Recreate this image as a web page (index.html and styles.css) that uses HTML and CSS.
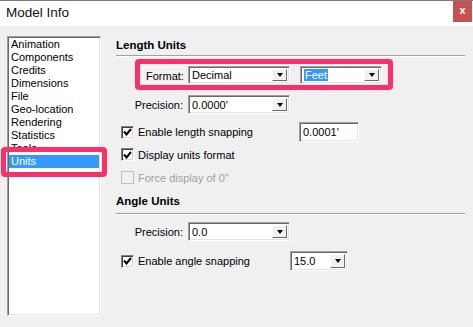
FILE: index.html
```html
<!DOCTYPE html>
<html lang="en">
<head>
    <meta charset="UTF-8">
    <title>Model Info</title>
    <link rel="stylesheet" href="styles.css">
</head>
<body>

    <div class="titlebar">
        <span class="title">Model Info</span>
        <span class="close">x</span>
    </div>

    <div class="dialog">
        <ul class="list">
            <li>Animation</li>
            <li>Components</li>
            <li>Credits</li>
            <li>Dimensions</li>
            <li>File</li>
            <li>Geo-location</li>
            <li>Rendering</li>
            <li>Statistics</li>
            <li>Tools</li>
            <li class="selected">Units</li>
        </ul>
        <div class="mark mark-units"></div>

        <div class="panel">
            <div class="heading">Length Units</div>
            <div class="sep"></div>

            <div class="format-box">
                <div class="format-row">
                    <span class="format-label">Format:</span>
                    <div class="combo combo-short"><span>Decimal</span><i class="arrow"></i></div>
                    <div class="combo combo-feet"><span class="picked">Feet</span><i class="arrow"></i></div>
                </div>
            </div>

            <div class="row prec-row">
                <span class="label">Precision:</span>
                <div class="combo"><span>0.0000'</span><i class="arrow"></i></div>
            </div>

            <div class="row check-row snap-row">
                <span class="check on"><svg width="9" height="8" viewBox="0 0 9 8"><path d="M1 3.5 L3.5 6.5 L8 1" fill="none" stroke="#000" stroke-width="2"/></svg></span>
                <span class="check-text snap-text">Enable length snapping</span>
                <div class="textbox">0.0001'</div>
            </div>

            <div class="row check-row units-row">
                <span class="check on"><svg width="9" height="8" viewBox="0 0 9 8"><path d="M1 3.5 L3.5 6.5 L8 1" fill="none" stroke="#000" stroke-width="2"/></svg></span>
                <span class="check-text">Display units format</span>
            </div>

            <div class="row check-row force-row">
                <span class="check off"></span>
                <span class="check-text muted">Force display of 0"</span>
            </div>

            <div class="heading angle-heading">Angle Units</div>
            <div class="sep angle-sep"></div>

            <div class="row angle-prec">
                <span class="label">Precision:</span>
                <div class="combo"><span>0.0</span><i class="arrow"></i></div>
            </div>

            <div class="row check-row angle-snap">
                <span class="check on"><svg width="9" height="8" viewBox="0 0 9 8"><path d="M1 3.5 L3.5 6.5 L8 1" fill="none" stroke="#000" stroke-width="2"/></svg></span>
                <span class="check-text angle-text">Enable angle snapping</span>
                <div class="combo combo-angle"><span>15.0</span><i class="arrow"></i></div>
            </div>
        </div>
    </div>

</body>
</html>
```

FILE: styles.css
```css
body {
    margin: 0;
    width: 473px;
    height: 327px;
    overflow: hidden;
    background: #f0f0f0;
    font-family: "Liberation Sans", Arial, sans-serif;
    font-size: 11px;
    color: #000;
}

.titlebar {
    height: 25px;
    background: #fff;
    border-top: 1px solid #7a7a7a;
    display: flex;
    align-items: flex-start;
    justify-content: space-between;
}

.title {
    font-size: 13.5px;
    line-height: 24px;
    padding-left: 6px;
    color: #111;
}

.close {
    width: 19px;
    height: 21px;
    margin-right: 1px;
    background: #c75050;
    color: #fff;
    font-weight: bold;
    font-size: 11px;
    line-height: 19px;
    text-align: center;
}

.dialog {
    position: relative;
    display: flex;
    align-items: flex-start;
    height: 301px;
}

.list {
    list-style: none;
    margin: 10px 0 0 7px;
    padding: 1px 0 0 0;
    width: 92px;
    height: 277px;
    background: #fff;
    border: 1px solid;
    border-color: #a0a0a0 #fff #fff #a0a0a0;
    box-shadow: inset 1px 1px 0 #696969, inset -1px -1px 0 #e3e3e3;
    overflow: hidden;
}

.list li {
    height: 13px;
    line-height: 13px;
    margin: 0 1px 0 1px;
    padding-left: 2px;
    white-space: nowrap;
}

.list li.selected {
    background: #3399ff;
    color: #fff;
}

.mark {
    position: absolute;
    border: 5px solid #fd2e6c;
    border-radius: 4px;
}

.mark-units {
    left: 1px;
    top: 121px;
    width: 96px;
    height: 20px;
}

.panel {
    margin-left: 15px;
    padding-top: 11px;
    width: 349px;
}

.heading {
    font-weight: bold;
    font-size: 11.5px;
    height: 16px;
    line-height: 16px;
}

.sep {
    margin-top: 2px;
    border-top: 1px solid #a0a0a0;
    border-bottom: 1px solid #fff;
}

.format-box {
    margin: 2px 0 0 19px;
    width: 244px;
    border: 5px solid #fd2e6c;
    border-radius: 4px;
    padding: 2px 2px 1px 2px;
}

.format-row {
    display: flex;
    align-items: center;
    height: 18px;
}

.format-label {
    width: 46px;
    height: 16px;
    line-height: 16px;
    padding-left: 3px;
    border: 1px solid #fafafa;
    border-right: none;
    box-sizing: border-box;
}

.combo {
    display: flex;
    align-items: center;
    justify-content: space-between;
    width: 102px;
    height: 19px;
    box-sizing: border-box;
    background: #fff;
    border: 1px solid;
    border-color: #a0a0a0 #fff #fff #a0a0a0;
    box-shadow: inset 1px 1px 0 #696969, inset -1px -1px 0 #e3e3e3;
    padding: 2px 2px 2px 3px;
}

.format-row .combo {
    height: 18px;
}

.combo-feet {
    width: 82px;
    margin-left: 10px;
}

.picked {
    background: #3399ff;
    color: #fff;
    padding: 0 1px;
}

.arrow {
    width: 15px;
    height: 100%;
    box-sizing: border-box;
    background: #f0f0f0;
    border: 1px solid;
    border-color: #fff #696969 #696969 #fff;
    display: flex;
    align-items: center;
    justify-content: center;
}

.arrow::after {
    content: "";
    border-left: 3.5px solid transparent;
    border-right: 3.5px solid transparent;
    border-top: 4px solid #000;
}

.row {
    display: flex;
    align-items: center;
}

.label {
    width: 67px;
    text-align: right;
    margin-right: 5px;
}

.prec-row {
    margin-top: 5px;
}

.check-row {
    padding-left: 5px;
}

.check {
    width: 13px;
    height: 13px;
    box-sizing: border-box;
    border: 1px solid;
    border-color: #808080 #fff #fff #808080;
    box-shadow: inset 1px 1px 0 #404040, inset -1px -1px 0 #d4d4d4;
    background: #fff;
    display: flex;
    align-items: center;
    justify-content: center;
}

.check.off {
    border-color: #c0c0c0;
    box-shadow: none;
    background: #f0f0f0;
}

.check-text {
    margin-left: 4px;
}

.muted {
    color: #a0a0a0;
}

.snap-row {
    margin-top: 8px;
    height: 20px;
}

.snap-text {
    width: 161px;
}

.textbox {
    width: 60px;
    height: 20px;
    box-sizing: border-box;
    background: #fff;
    border: 1px solid;
    border-color: #a0a0a0 #fff #fff #a0a0a0;
    box-shadow: inset 1px 1px 0 #696969, inset -1px -1px 0 #e3e3e3;
    padding: 3px 3px;
    line-height: 13px;
}

.units-row {
    margin-top: 6px;
    height: 13px;
}

.force-row {
    margin-top: 10px;
    height: 13px;
}

.angle-heading {
    margin-top: 9px;
}

.angle-sep {
    margin-top: 4px;
}

.angle-prec {
    margin-top: 7px;
}

.angle-snap {
    margin-top: 10px;
    height: 20px;
}

.angle-text {
    width: 152px;
}

.combo-angle {
    width: 58px;
    height: 20px;
}
```
